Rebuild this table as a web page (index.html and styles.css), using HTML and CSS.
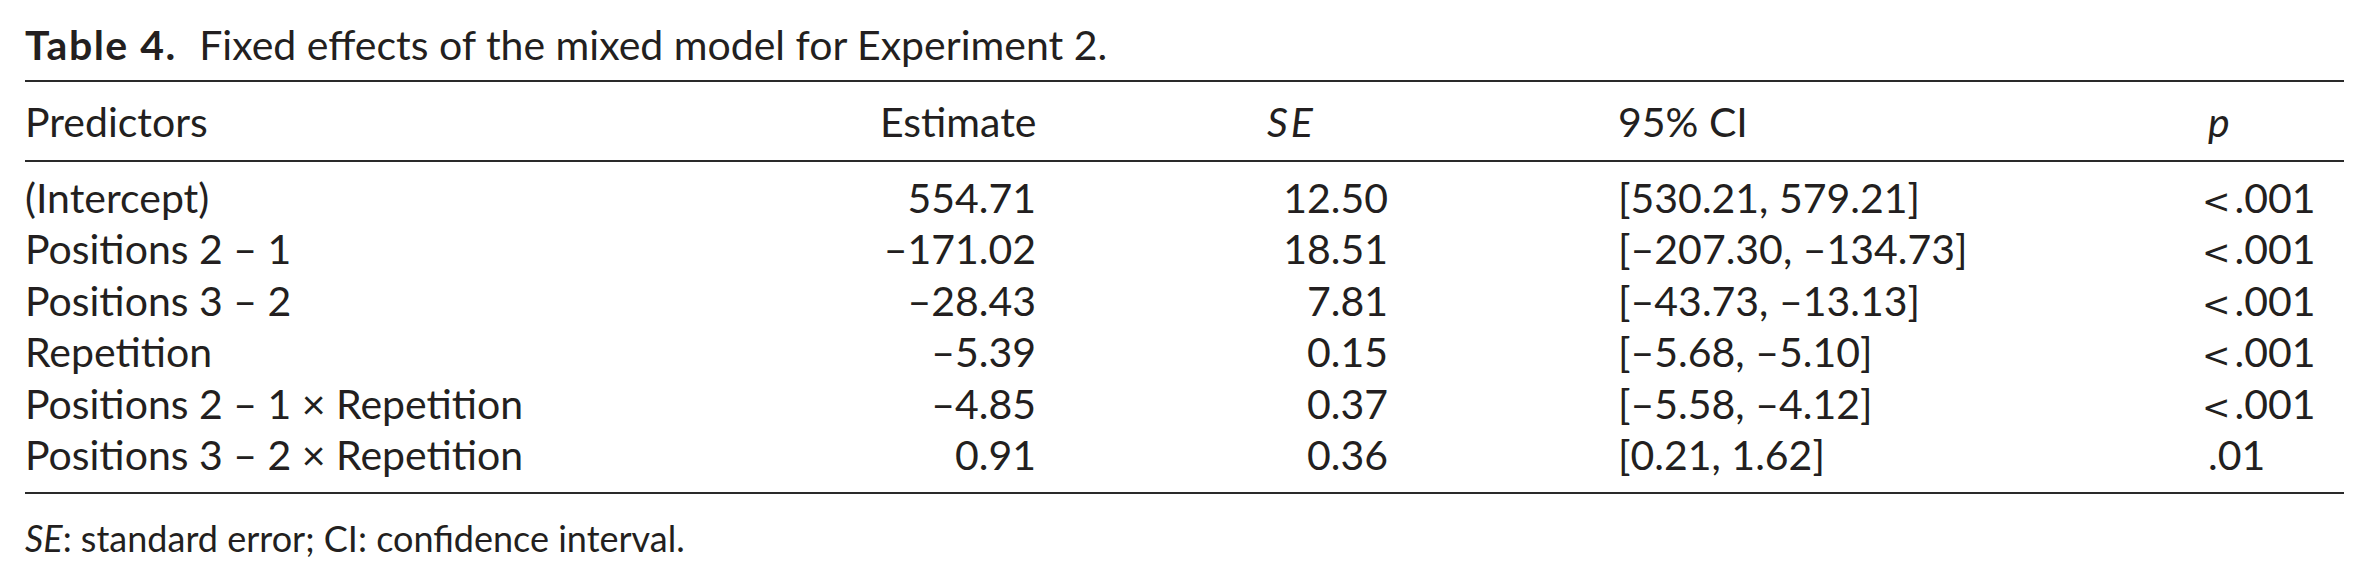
FILE: index.html
```html
<!DOCTYPE html>
<html lang="en">
<head>
<meta charset="utf-8">
<title>Table 4</title>
<link rel="stylesheet" href="styles.css">
</head>
<body>
<div class="wrap">
  <p class="caption"><b class="label">Table 4.</b> Fixed effects of the mixed model for Experiment 2.</p>
  <table class="tbl">
    <colgroup>
      <col class="c1"><col class="c2"><col class="c3"><col class="c4"><col class="c5">
    </colgroup>
    <thead>
      <tr>
        <th class="left">Predictors</th>
        <th class="right">Estimate</th>
        <th class="se-h"><i>SE</i></th>
        <th class="ci">95% CI</th>
        <th class="pcol"><i>p</i></th>
      </tr>
    </thead>
    <tbody>
      <tr><td class="left">(Intercept)</td><td class="right">554.71</td><td class="right">12.50</td><td class="ci">[530.21, 579.21]</td><td class="pcol"><span class="lt">&lt;</span>.001</td></tr>
      <tr><td class="left">Positions 2 – 1</td><td class="right">–171.02</td><td class="right">18.51</td><td class="ci">[–207.30, –134.73]</td><td class="pcol"><span class="lt">&lt;</span>.001</td></tr>
      <tr><td class="left">Positions 3 – 2</td><td class="right">–28.43</td><td class="right">7.81</td><td class="ci">[–43.73, –13.13]</td><td class="pcol"><span class="lt">&lt;</span>.001</td></tr>
      <tr><td class="left">Repetition</td><td class="right">–5.39</td><td class="right">0.15</td><td class="ci">[–5.68, –5.10]</td><td class="pcol"><span class="lt">&lt;</span>.001</td></tr>
      <tr><td class="left">Positions 2 – 1 × Repetition</td><td class="right">–4.85</td><td class="right">0.37</td><td class="ci">[–5.58, –4.12]</td><td class="pcol"><span class="lt">&lt;</span>.001</td></tr>
      <tr><td class="left">Positions 3 – 2 × Repetition</td><td class="right">0.91</td><td class="right">0.36</td><td class="ci">[0.21, 1.62]</td><td class="pcol p-plain">.01</td></tr>
    </tbody>
  </table>
  <p class="note"><i>SE</i>: standard error; CI: confidence interval.</p>
</div>
</body>
</html>
```

FILE: styles.css
```css
html, body {
  margin: 0;
  padding: 0;
  background: #ffffff;
}

body {
  font-family: Lato, "Open Sans", "Liberation Sans", sans-serif;
  color: #231f20;
  font-size: 41px;
}

.wrap {
  padding-left: 25px;
  width: 2319px;
}

.caption {
  margin: 0;
  height: 80px;
  line-height: 90px;
  font-size: 41px;
}

.caption .label {
  font-weight: 700;
  letter-spacing: 1.5px;
  margin-right: 12px;
}

.tbl {
  width: 2319px;
  table-layout: fixed;
  border-collapse: collapse;
  border-top: 2px solid #2a2a2a;
  border-bottom: 2px solid #2a2a2a;
}

.c1 { width: 855px; }
.c2 { width: 156px; }
.c3 { width: 352px; }
.c4 { width: 817px; }
.c5 { width: 139px; }

.tbl th {
  font-weight: 400;
  height: 78px;
  padding: 0;
  border-bottom: 2px solid #2a2a2a;
  vertical-align: middle;
  white-space: nowrap;
}

.tbl td {
  padding: 0;
  height: 51.4px;
  line-height: 51.4px;
  white-space: nowrap;
}

.tbl tbody tr:first-child td {
  padding-top: 10px;
}

.tbl tbody tr:last-child td {
  padding-bottom: 12px;
}

.left { text-align: left; }
.right { text-align: right; }

.se-h {
  text-align: left;
  padding-left: 231px !important;
  letter-spacing: 3px;
}

.ci {
  text-align: left;
  padding-left: 230px !important;
}

.pcol {
  text-align: left;
}

th.pcol {
  padding-left: 3px !important;
}

.lt {
  font-family: "DejaVu Sans", sans-serif;
  font-size: 34px;
  font-weight: 400;
  line-height: 0;
  margin-right: 4px;
  margin-left: -3px;
}

.p-plain {
  padding-left: 3px !important;
}

.note {
  margin: 0;
  height: 86px;
  line-height: 88px;
  font-size: 36px;
}
```
